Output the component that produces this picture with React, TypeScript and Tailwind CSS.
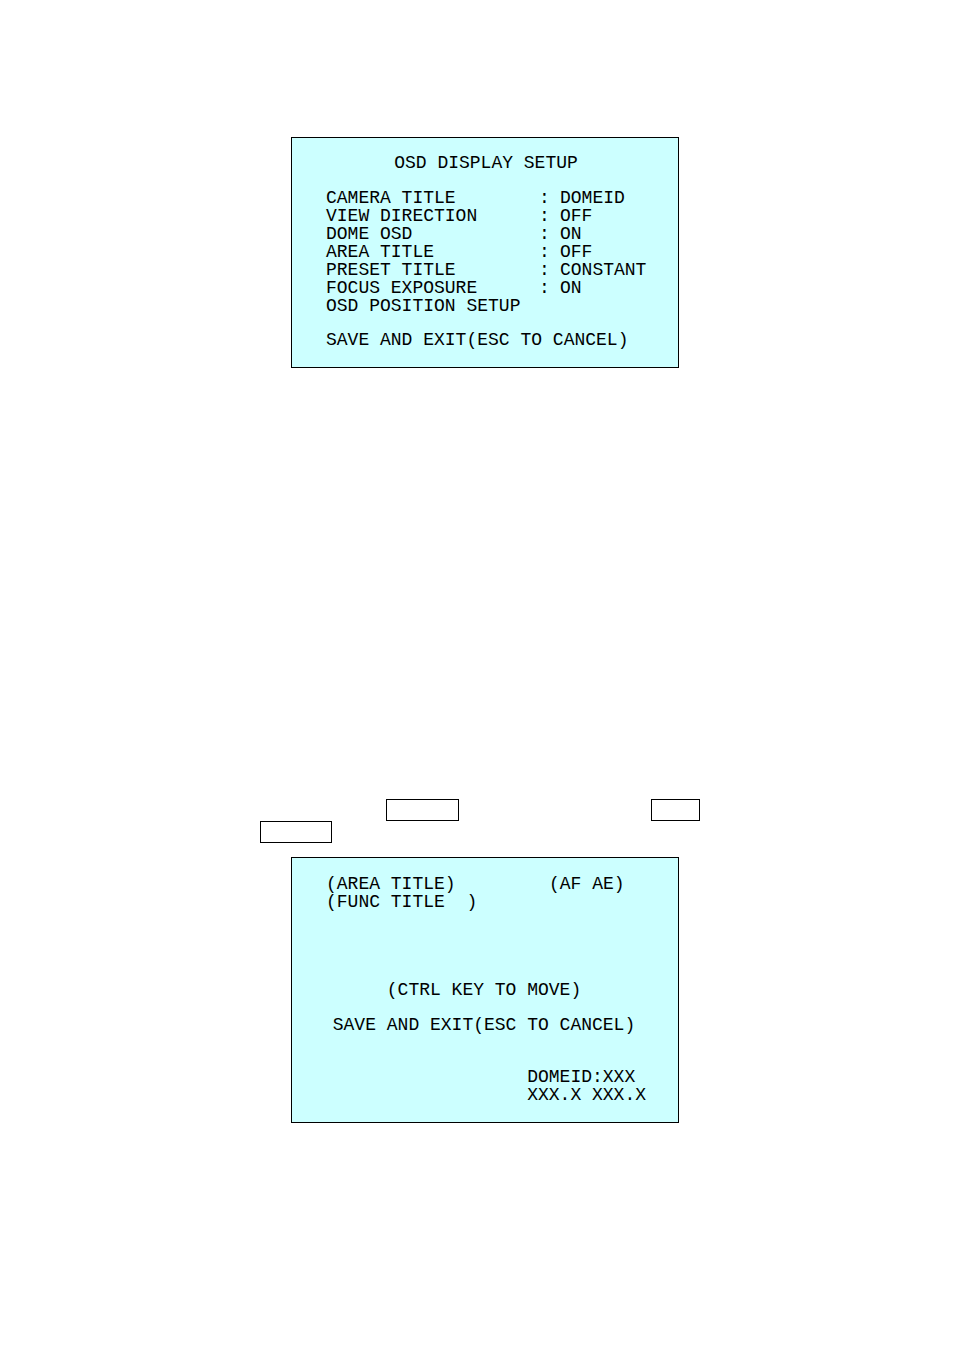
import type { ReactNode } from "react";

const settings = [
  { label: "CAMERA TITLE", value: "DOMEID" },
  { label: "VIEW DIRECTION", value: "OFF" },
  { label: "DOME OSD", value: "ON" },
  { label: "AREA TITLE", value: "OFF" },
  { label: "PRESET TITLE", value: "CONSTANT" },
  { label: "FOCUS EXPOSURE", value: "ON" },
];

function Screen({ label, children }: { label: string; children: ReactNode }) {
  return (
    <section
      aria-label={label}
      className="w-full max-w-[388px] border border-black bg-[#ccffff] pr-7 pl-[34px] whitespace-pre"
    >
      {children}
    </section>
  );
}

function SetupScreen() {
  return (
    <Screen label="OSD display setup">
      <div className="flex flex-col items-start pt-4 pb-[18px]">
        <h1 className="self-center pr-1">OSD DISPLAY SETUP</h1>
        <table className="mt-[17px] w-full table-fixed border-collapse text-left">
          <tbody>
            {settings.map(({ label, value }) => (
              <tr key={label}>
                <th scope="row" className="w-[213px] p-0 font-normal">
                  {label}
                </th>
                <td className="w-[21px] p-0">:</td>
                <td className="p-0">{value}</td>
              </tr>
            ))}
          </tbody>
        </table>
        <button type="button">OSD POSITION SETUP</button>
        <button type="button" className="mt-4">
          SAVE AND EXIT(ESC TO CANCEL)
        </button>
      </div>
    </Screen>
  );
}

function PositionScreen() {
  return (
    <Screen label="OSD position setup">
      <div className="flex flex-col pt-[17px] pb-[18px]">
        <div className="flex">
          <p className="w-[223px]">(AREA TITLE)</p>
          <p>(AF AE)</p>
        </div>
        <p>{"(FUNC TITLE  )"}</p>
        <p className="mt-[70px] self-center pr-2">(CTRL KEY TO MOVE)</p>
        <button type="button" className="mt-[17px] self-center pr-2">
          SAVE AND EXIT(ESC TO CANCEL)
        </button>
        <div className="mt-[34px] self-end pr-1">
          <p>DOMEID:XXX</p>
          <p>XXX.X XXX.X</p>
        </div>
      </div>
    </Screen>
  );
}

export default function App() {
  return (
    <main className="flex min-h-screen flex-col items-center bg-white pt-[137px] pb-16 pl-4 font-['Liberation_Mono',monospace] text-[18px] leading-[18px] text-black">
      <SetupScreen />
      <div className="mt-[431px] w-full max-w-[450px]">
        <div className="flex gap-48 pl-[126px]">
          <div className="h-[22px] w-[73px] border border-black" />
          <div className="h-[22px] w-[49px] border border-black" />
        </div>
        <div className="h-[22px] w-[72px] border border-black" />
      </div>
      <div className="mt-[14px] flex w-full justify-center">
        <PositionScreen />
      </div>
    </main>
  );
}
